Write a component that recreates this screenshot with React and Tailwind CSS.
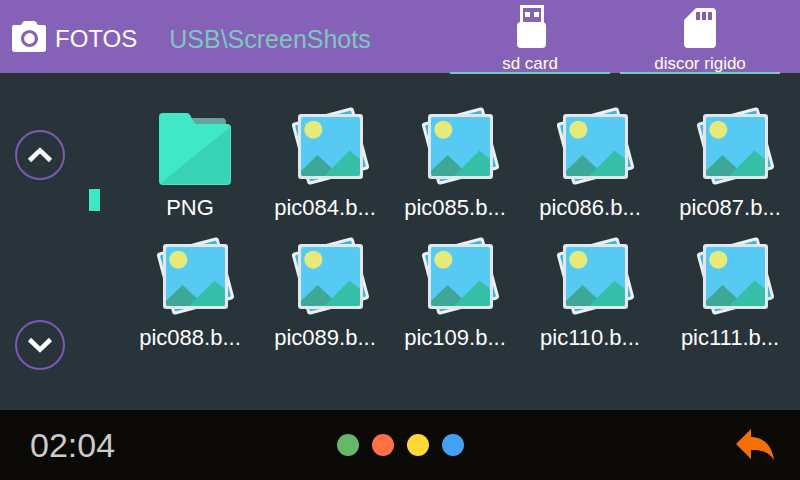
const FILES = [
  { name: "PNG", folder: true },
  { name: "pic084.b..." },
  { name: "pic085.b..." },
  { name: "pic086.b..." },
  { name: "pic087.b..." },
  { name: "pic088.b..." },
  { name: "pic089.b..." },
  { name: "pic109.b..." },
  { name: "pic110.b..." },
  { name: "pic111.b..." },
];

function CameraIcon() {
  return (
    <svg width="36" height="32" viewBox="0 0 36 32" aria-hidden="true">
      <path
        fill="#fff"
        d="M3 5h7l2-3q1-1 2-1h9q1 0 2 1l2 3h6q2 0 2 2v22q0 3-3 3H4q-3 0-3-3V7q0-2 2-2z"
      />
      <circle cx="18.5" cy="18.5" r="7" fill="#fff" stroke="#8562b8" strokeWidth="3.2" />
    </svg>
  );
}

function UsbIcon() {
  return (
    <svg width="32" height="43" viewBox="0 0 32 43" aria-hidden="true">
      <path fill="none" stroke="#fff" strokeWidth="3" d="M7.5 19V1.500h21V19" />
      <path fill="#fff" d="M11 7h5v5h-5zM20 7h5v5h-5z" />
      <rect x="3" y="17" width="29" height="26" rx="4" fill="#fff" />
    </svg>
  );
}

function SdIcon() {
  return (
    <svg width="32" height="40" viewBox="0 0 32 40" aria-hidden="true">
      <path
        fill="#fff"
        fillRule="evenodd"
        d="M13 0h15q4 0 4 4v32q0 4-4 4H4q-4 0-4-4V13q0-1 1-2L11 1q1-1 2-1zM12 4v8h4V4zM18 4v8h4V4zM24 4v8h4V4z"
      />
    </svg>
  );
}

function Chevron({ down }) {
  return (
    <svg width="26" height="16" viewBox="0 0 26 16" aria-hidden="true">
      <path
        fill="none"
        stroke="#fff"
        strokeWidth="4.6"
        d={down ? "M2.500 2.500L13 12.600l10.500-10.100" : "M2.500 13.500L13 3.400l10.500 10.100"}
      />
    </svg>
  );
}

function FolderIcon() {
  return (
    <svg className="block" width="80" height="80" viewBox="0 0 80 80" aria-hidden="true">
      <path fill="#67a39b" d="M34 12h33q4 0 4 4v6H38z" />
      <path
        fill="#3fe9c8"
        d="M8 7h24q2 0 3 2l4 7q1 2 3 2h30q4 0 4 4v53q0 4-4 4H8q-4 0-4-4V11q0-4 4-4z"
      />
      <path fill="#38d2b5" d="M75 21v53q0 4-4 4H8l-2-1z" />
    </svg>
  );
}

function PhotoIcon() {
  return (
    <svg className="block" width="80" height="80" viewBox="0 0 80 80" aria-hidden="true">
      <g transform="rotate(-15 40.500 40)">
        <rect x="8.500" y="8" width="64" height="64" rx="3" fill="#edf1f4" />
        <rect x="11.500" y="11" width="58" height="58" rx="1" fill="#3bb3e5" />
      </g>
      <rect x="8" y="8" width="65" height="65" rx="3" fill="#e1e7ec" />
      <rect x="11" y="11" width="59" height="59" rx="2" fill="#57caf4" />
      <circle cx="23.300" cy="23.700" r="9" fill="#e7ea78" />
      <path fill="#3ea898" d="M11 65l16.500-16L48 68v2H13q-2 0-2-2z" />
      <path fill="#35bfa8" d="M34 70l25.500-25.500L70 53v15q0 2-2 2z" />
    </svg>
  );
}

function BackIcon() {
  return (
    <svg width="38" height="32" viewBox="0 0 38 32" aria-hidden="true">
      <path fill="#f56f05" d="M0 15L15 0v8c12 0 21 8 23 23-6-8-11-10-23-10v9z" />
    </svg>
  );
}

function Tab({ icon, label }) {
  return (
    <button
      type="button"
      className="flex h-[74px] w-40 flex-col items-center justify-end border-b-2 border-[#7cc9bd] text-[17px] leading-4 text-white"
    >
      <span className="mb-2">{icon}</span>
      {label}
    </button>
  );
}

function RoundButton({ down }) {
  return (
    <button
      type="button"
      aria-label={down ? "Page down" : "Page up"}
      className="flex size-[50px] items-center justify-center rounded-full border-2 border-[#7f58b5]"
    >
      <Chevron down={down} />
    </button>
  );
}

export default function App() {
  return (
    <div className="flex min-h-screen flex-col bg-[#29343a] font-['Liberation_Sans',Arial,sans-serif]">
      <header className="flex h-[73px] items-start bg-[#8562b8] pr-5 pl-[11px]">
        <h1 className="flex items-center gap-2 pt-[17px] text-2xl text-white">
          <CameraIcon />
          <span className="pt-[6px]">FOTOS</span>
        </h1>
        <p className="pt-[23px] pl-8 text-[25px] leading-8 text-[#7cc9bd]">USB\ScreenShots</p>
        <nav className="ml-auto flex gap-[10px]">
          <Tab icon={<UsbIcon />} label="sd card" />
          <Tab icon={<SdIcon />} label="discor rigido" />
        </nav>
      </header>

      <main className="flex flex-1">
        <aside className="flex w-[140px] shrink-0 items-start gap-6 pt-[57px] pl-[15px]">
          <div className="flex h-60 flex-col justify-between">
            <RoundButton />
            <RoundButton down />
          </div>
          <div className="pt-[59px]">
            <div className="h-[22px] w-[11px] bg-[#3fe9c8]" />
          </div>
        </aside>
        <section className="grid flex-1 grid-cols-[135fr_130fr_135fr_140fr_120fr] content-start gap-y-[15px] pt-[33px]">
          {FILES.map((file) => (
            <button
              key={file.name}
              type="button"
              className="flex w-[100px] flex-col items-center gap-[9px] text-[22px] leading-[26px] text-white"
            >
              <span className="pl-[10px]">{file.folder ? <FolderIcon /> : <PhotoIcon />}</span>
              <span className="whitespace-nowrap">{file.name}</span>
            </button>
          ))}
        </section>
      </main>

      <footer className="grid h-[70px] grid-cols-[1fr_auto_1fr] items-center bg-[#0a0905] px-[26px]">
        <time className="pl-1 text-[34px] leading-10 text-[#cbcbcb]">02:04</time>
        <div className="flex gap-[13px]">
          <span className="size-[22px] rounded-full bg-[#66b76a]" />
          <span className="size-[22px] rounded-full bg-[#ff7045]" />
          <span className="size-[22px] rounded-full bg-[#ffd835]" />
          <span className="size-[22px] rounded-full bg-[#42a2f5]" />
        </div>
        <button type="button" aria-label="Back" className="justify-self-end">
          <BackIcon />
        </button>
      </footer>
    </div>
  );
}
